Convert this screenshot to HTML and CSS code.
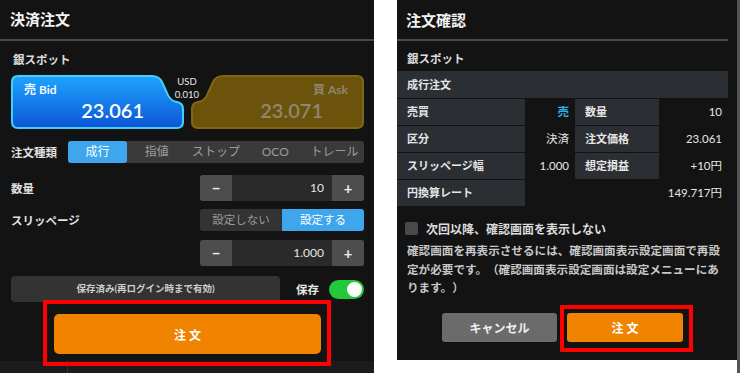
FILE: index.html
```html
<!DOCTYPE html>
<html lang="ja">
<head>
    <meta charset="UTF-8">
    <meta name="viewport" content="width=device-width, initial-scale=1.0">
    <title>決済注文</title>
    <link rel="stylesheet" href="styles.css">
</head>
<body>
    <div class="panel order-panel">
        <div class="panel-header">決済注文</div>
        <div class="product">銀スポット</div>

        <div class="price-row">
            <div class="price-card bid">
                <svg class="card-shape" width="173" height="54" viewBox="0 0 173 54">
                    <defs>
                        <linearGradient id="bidFill" x1="0" y1="0" x2="0" y2="1">
                            <stop offset="0" stop-color="#1ea4ff"/>
                            <stop offset="1" stop-color="#0b55d6"/>
                        </linearGradient>
                    </defs>
                    <path d="M7,1 H141 Q148,1 151,7 L156,18 Q159,26 166,27 Q172,28 172,34 V47 Q172,53 166,53 H7 Q1,53 1,47 V7 Q1,1 7,1 Z" fill="url(#bidFill)" stroke="#45cdfb" stroke-width="2"/>
                </svg>
                <div class="card-label">売 Bid</div>
                <div class="card-price">23.061</div>
            </div>
            <div class="price-card ask">
                <svg class="card-shape" width="174" height="54" viewBox="0 0 174 54">
                    <path d="M167,1 H33 Q26,1 23,7 L18,18 Q15,26 8,27 Q2,28 2,34 V47 Q2,53 8,53 H167 Q173,53 173,47 V7 Q173,1 167,1 Z" fill="#6c530c" stroke="#836516" stroke-width="2"/>
                </svg>
                <div class="card-label">買 Ask</div>
                <div class="card-price">23.071</div>
            </div>
            <div class="spread">USD<br>0.010</div>
        </div>

        <div class="form-row type-row">
            <span class="row-label">注文種類</span>
            <div class="segmented">
                <span class="seg active">成行</span>
                <span class="seg">指値</span>
                <span class="seg">ストップ</span>
                <span class="seg">OCO</span>
                <span class="seg">トレール</span>
            </div>
        </div>

        <div class="form-row qty-row">
            <span class="row-label">数量</span>
            <div class="stepper">
                <span class="step-btn">&minus;</span>
                <span class="step-value">10</span>
                <span class="step-btn">+</span>
            </div>
        </div>

        <div class="form-row slip-row">
            <span class="row-label">スリッページ</span>
            <div class="toggle-pair">
                <span class="pair-item">設定しない</span>
                <span class="pair-item active">設定する</span>
            </div>
        </div>

        <div class="form-row slip-value">
            <div class="stepper">
                <span class="step-btn">&minus;</span>
                <span class="step-value">1.000</span>
                <span class="step-btn">+</span>
            </div>
        </div>

        <div class="save-row">
            <div class="save-note">保存済み(再ログイン時まで有効)</div>
            <span class="save-label">保存</span>
            <span class="switch"><span class="knob"></span></span>
        </div>

        <button class="order-btn wide">注 文</button>
        <div class="footer-strip"><span></span></div>

        <div class="mark mark-left"></div>
    </div>

    <div class="panel confirm-panel">
        <div class="panel-header">注文確認</div>
        <div class="product">銀スポット</div>
        <div class="kind-row">成行注文</div>

        <div class="detail-grid">
            <div class="cell label">売買</div>
            <div class="cell value sell">売</div>
            <div class="cell label">数量</div>
            <div class="cell value">10</div>

            <div class="cell label">区分</div>
            <div class="cell value">決済</div>
            <div class="cell label">注文価格</div>
            <div class="cell value">23.061</div>

            <div class="cell label">スリッページ幅</div>
            <div class="cell value">1.000</div>
            <div class="cell label">想定損益</div>
            <div class="cell value">+10円</div>

            <div class="cell label">円換算レート</div>
            <div class="cell value rate">149.717円</div>
        </div>

        <label class="check-row">
            <span class="check-box"></span>
            <span>次回以降、確認画面を表示しない</span>
        </label>

        <p class="note">確認画面を再表示させるには、確認画面表示設定画面で再設定が必要です。（確認画面表示設定画面は設定メニューにあります。）</p>

        <div class="dialog-actions">
            <button class="cancel-btn">キャンセル</button>
            <button class="order-btn small">注 文</button>
        </div>

        <div class="mark mark-right"></div>
    </div>
    <div class="edge-strip"></div>
</body>
</html>
```

FILE: styles.css
```css
:root {
    --bg-panel: #131313;
    --bg-cell: #2b2f33;
    --bg-control: #3a3a3a;
    --bg-btn: #4d4d4d;
    --text-main: #e6e6e6;
    --text-dim: #9c9c9c;
    --accent-blue: #3ea6ec;
    --accent-orange: #f08300;
    --line: #4a4a4a;
}

* {
    box-sizing: border-box;
}

body {
    margin: 0;
    width: 740px;
    height: 373px;
    overflow: hidden;
    background: #fff;
    display: flex;
    align-items: flex-start;
    font-family: "Lato", "Noto Sans CJK JP", sans-serif;
    color: var(--text-main);
}

.panel {
    position: relative;
    background: var(--bg-panel);
}

.panel-header {
    height: 41px;
    padding-left: 10px;
    border-bottom: 2px solid var(--line);
    font-size: 15px;
    font-weight: 700;
    line-height: 39px;
    color: #f2f2f2;
}

.product {
    font-size: 11.5px;
    font-weight: 700;
    color: #dcdcdc;
}

/* left: order form */

.order-panel {
    width: 374px;
    height: 373px;
    padding: 0 10px 0 11px;
    display: flex;
    flex-direction: column;
}

.order-panel .panel-header {
    margin: 0 -10px 0 -11px;
}

.order-panel .product {
    padding: 10px 0 0 2px;
    height: 34px;
}

.price-row {
    position: relative;
    display: flex;
    gap: 6px;
    height: 54px;
}

.price-card {
    position: relative;
    width: 173px;
    height: 54px;
}

.price-card.ask {
    width: 174px;
}

.card-shape {
    position: absolute;
    left: 0;
    top: 0;
}

.card-label,
.card-price {
    position: relative;
    font-weight: 700;
}

.card-label {
    font-size: 12px;
    padding-top: 5px;
}

.card-price {
    font-size: 20px;
    font-weight: 600;
    line-height: 24px;
    margin-top: 1px;
    text-align: right;
}

.bid .card-label {
    padding-left: 13px;
    color: #f4f8ff;
}

.bid .card-price {
    padding-right: 40px;
    color: #fff;
}

.ask .card-label {
    text-align: right;
    padding-right: 16px;
    color: #8f8770;
}

.ask .card-price {
    padding-right: 41px;
    color: #8f8770;
}

.spread {
    position: absolute;
    left: 160px;
    top: 0;
    width: 32px;
    font-size: 9.5px;
    line-height: 13px;
    text-align: center;
    color: #e8e8e8;
}

.form-row {
    display: flex;
    align-items: center;
    justify-content: space-between;
}

.row-label {
    font-size: 11.5px;
    font-weight: 700;
    color: #e0e0e0;
}

.type-row {
    margin-top: 12px;
    height: 22px;
}

.segmented {
    display: flex;
    width: 296px;
    height: 22px;
    background: var(--bg-control);
    border-radius: 3px;
}

.seg {
    flex: 1;
    font-size: 12px;
    line-height: 22px;
    text-align: center;
    color: var(--text-dim);
}

.seg.active {
    background: var(--accent-blue);
    border-radius: 3px;
    color: #fff;
}

.qty-row {
    margin-top: 12px;
}

.stepper {
    display: flex;
    width: 164px;
    height: 26px;
    border-radius: 3px;
    overflow: hidden;
    background: #2a2a2a;
}

.step-btn {
    width: 32px;
    background: var(--bg-btn);
    color: #eee;
    font-size: 15px;
    line-height: 26px;
    text-align: center;
    font-weight: 700;
}

.step-value {
    flex: 1;
    padding-right: 8px;
    font-size: 12px;
    line-height: 26px;
    text-align: right;
}

.slip-row {
    margin-top: 8px;
}

.toggle-pair {
    display: flex;
    width: 164px;
    height: 22px;
    border-radius: 3px;
    overflow: hidden;
    background: #333;
}

.pair-item {
    flex: 1;
    font-size: 11.5px;
    line-height: 22px;
    text-align: center;
    color: var(--text-dim);
}

.pair-item.active {
    background: var(--accent-blue);
    color: #fff;
}

.slip-value {
    justify-content: flex-end;
    margin-top: 9px;
}

.save-row {
    display: flex;
    align-items: center;
    margin-top: 10px;
    height: 26px;
}

.save-note {
    width: 269px;
    height: 26px;
    background: #333;
    border-radius: 4px;
    font-size: 9.5px;
    font-weight: 700;
    line-height: 26px;
    text-align: center;
    color: #cfcfcf;
}

.save-label {
    margin-left: 16px;
    font-size: 11.5px;
    font-weight: 700;
}

.switch {
    position: relative;
    margin-left: auto;
    width: 35px;
    height: 19px;
    border-radius: 10px;
    background: #22c93a;
}

.knob {
    position: absolute;
    right: 2px;
    top: 2px;
    width: 15px;
    height: 15px;
    border-radius: 50%;
    background: #fff;
}

button {
    border: none;
    cursor: pointer;
    font-family: inherit;
    font-weight: 700;
    color: #fff;
}

.order-btn {
    background: var(--accent-orange);
    border-radius: 5px;
    font-size: 12px;
}

.order-btn.wide {
    margin: 12px 0 0 43px;
    width: 267px;
    height: 40px;
    flex: none;
}

.footer-strip {
    margin: 7px -10px 0 -11px;
    flex: 1;
    background: #1b1b1b;
}

.footer-strip span {
    display: block;
    margin-left: 67px;
    width: 1px;
    height: 100%;
    background: #333;
}

.mark {
    position: absolute;
    border: 4px solid #ff0000;
}

.mark-left {
    left: 43px;
    top: 300px;
    width: 288px;
    height: 66px;
}

/* right: confirmation dialog */

.confirm-panel {
    margin-left: 23px;
    width: 340px;
    height: 360px;
    padding-right: 9px;
}

.confirm-panel .panel-header {
    height: 41px;
    padding-left: 9px;
    line-height: 41px;
}

.confirm-panel .product {
    height: 30px;
    padding: 9px 0 0 10px;
}

.kind-row {
    height: 27px;
    padding-left: 10px;
    background: var(--bg-cell);
    font-size: 11px;
    font-weight: 700;
    line-height: 27px;
}

.detail-grid {
    display: grid;
    grid-template-columns: 128px 50px 84px 69px;
    grid-auto-rows: 26px;
    row-gap: 1px;
    margin-top: 1px;
}

.cell {
    font-size: 11.5px;
    line-height: 26px;
}

.cell.label {
    padding-left: 10px;
    background: var(--bg-cell);
    font-weight: 700;
    font-size: 11px;
}

.cell.value {
    padding-right: 6px;
    text-align: right;
}

.cell.sell {
    color: #27b3e6;
    font-weight: 700;
}

.cell.rate {
    grid-column: 2 / 5;
}

.check-row {
    display: flex;
    align-items: center;
    gap: 8px;
    height: 17px;
    margin: 14px 0 0 8px;
    font-size: 12px;
    font-weight: 700;
    color: #dcdcdc;
}

.check-box {
    width: 13px;
    height: 13px;
    border-radius: 2px;
    background: #4a4a4a;
}

.note {
    margin: 5px 0 0 10px;
    width: 314px;
    font-size: 11.6px;
    line-height: 18.5px;
    font-weight: 700;
    color: #c8c8c8;
    text-spacing-trim: space-all;
}

.dialog-actions {
    display: flex;
    justify-content: center;
    gap: 10px;
    margin-top: 15px;
}

.cancel-btn {
    width: 115px;
    height: 29px;
    background: #6b6b6b;
    border-radius: 3px;
    font-size: 12px;
    color: #eee;
}

.order-btn.small {
    width: 116px;
    height: 29px;
    border-radius: 3px;
}

.mark-right {
    left: 163px;
    top: 305px;
    width: 133px;
    height: 47px;
}

.edge-strip {
    width: 3px;
    height: 373px;
    background: #555;
}
```
